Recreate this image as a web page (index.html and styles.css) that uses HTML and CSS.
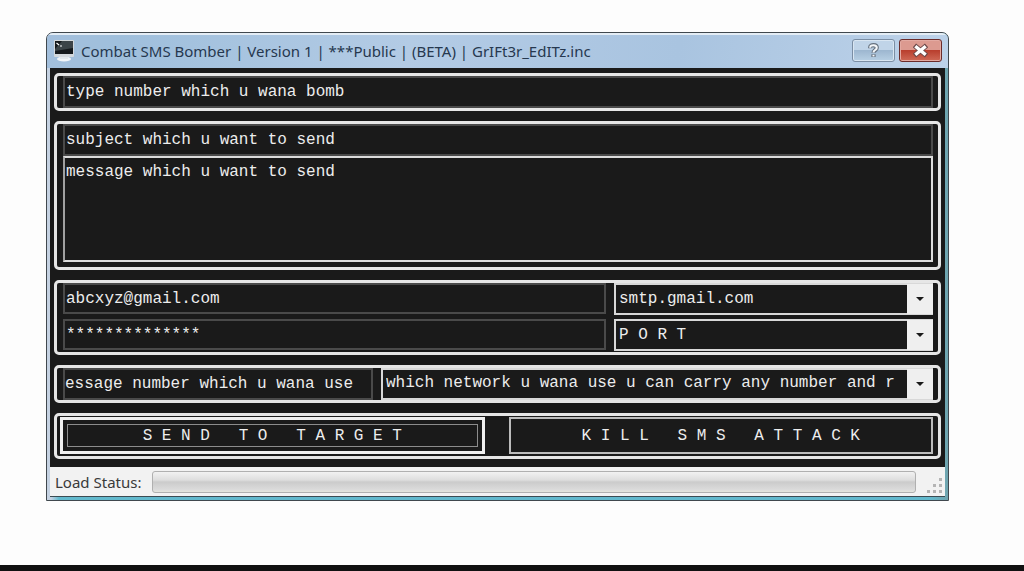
FILE: index.html
```html
<!DOCTYPE html>
<html lang="en">
<head>
<meta charset="utf-8">
<title>Combat SMS Bomber</title>
<link rel="stylesheet" href="styles.css">
</head>
<body>
<main class="window">
  <header class="titlebar">
    <svg class="app-icon" viewBox="0 0 20 22" aria-hidden="true">
      <ellipse cx="10" cy="19" rx="7" ry="2.500" fill="#f1f5f8"/>
      <rect x="6" y="14" width="8" height="5" fill="#e3e8ec"/>
      <rect x="0" y="0" width="20" height="17" rx="1" fill="#d3d8dc"/>
      <rect x="1" y="1" width="18" height="13" fill="#15191c"/>
      <path d="M8 1H19V8L1 11V9Z" fill="#3c4448"/>
      <path d="M2.500 3L5 5M6 6H8" stroke="#fff" stroke-width="1.200" fill="none"/>
    </svg>
    <h1 class="title">Combat SMS Bomber | Version 1 | ***Public | (BETA) | GrIFt3r_EdITz.inc</h1>
    <div class="caption-buttons">
      <button class="caption help" type="button" aria-label="Help">
        <svg viewBox="0 0 16 16" aria-hidden="true"><path d="M4.500 5.500V4.500C4.500 1.500 11.500 1.500 11.500 5C11.500 7.500 8 7.500 8 10.500M8 12V15" fill="none" stroke="#66727f" stroke-width="4.500"/><path d="M4.500 5V4.500C4.500 1.500 11.500 1.500 11.500 5C11.500 7.500 8 7.500 8 10M8 12.500V14.500" fill="none" stroke="#f4f7fa" stroke-width="2.200"/></svg>
      </button>
      <button class="caption close" type="button" aria-label="Close">
        <svg viewBox="0 0 16 16" aria-hidden="true"><path d="M1.500 2.500L14.500 13.500M14.500 2.500L1.500 13.500" fill="none" stroke="#6d4a4a" stroke-width="5.500"/><path d="M2.500 3.500L13.500 12.500M13.500 3.500L2.500 12.500" fill="none" stroke="#fff" stroke-width="3.600"/></svg>
      </button>
    </div>
  </header>
  <form class="client">
    <section class="group">
      <input class="field" type="text" aria-label="Number" value="type number which u wana bomb">
    </section>
    <section class="group group-message">
      <input class="field" type="text" aria-label="Subject" value="subject which u want to send">
      <textarea class="field message" aria-label="Message">message which u want to send</textarea>
    </section>
    <section class="group account">
      <input class="field" type="text" aria-label="Email" value="abcxyz@gmail.com">
      <div class="combo">
        <select class="combo-select" aria-label="Server"><option>smtp.gmail.com</option></select>
        <span class="arrow"></span>
      </div>
      <input class="field" type="text" aria-label="Password" value="**************">
      <div class="combo">
        <select class="combo-select" aria-label="Port"><option>P O R T</option></select>
        <span class="arrow"></span>
      </div>
    </section>
    <section class="group network">
      <input class="field" type="text" aria-label="Message number" value="essage number which u wana use">
      <div class="combo">
        <select class="combo-select" aria-label="Network"><option>which network u wana use u can carry any number and r</option></select>
        <span class="arrow"></span>
      </div>
    </section>
    <section class="group actions">
      <button class="action action-default" type="button"><span class="focus">S E N D   T O   T A R G E T</span></button>
      <button class="action" type="button">K I L L   S M S   A T T A C K</button>
    </section>
  </form>
  <footer class="status">
    <span class="status-label" id="load">Load Status:</span>
    <div class="progress" role="progressbar" aria-labelledby="load"></div>
    <svg class="grip" viewBox="0 0 15 15" aria-hidden="true"><path d="M12 0h3v3h-3zM6 6h3v3h-3zM12 6h3v3h-3zM0 12h3v3h-3zM6 12h3v3h-3zM12 12h3v3h-3z" fill="#b4b4b4"/></svg>
  </footer>
</main>
<div class="bottom-strip"></div>
</body>
</html>
```
FILE: styles.css
```css
* {
  box-sizing: border-box;
}

body {
  margin: 0;
  min-height: 100vh;
  display: flex;
  flex-direction: column;
  justify-content: space-between;
  background: #fdfdfd;
  font-family: "Noto Sans", sans-serif;
}

.window {
  margin: 32px 75px 24px 46px;
  padding: 0 3px 3px;
  border: 1px solid #40484e;
  border-radius: 7px 7px 0 0;
  background: linear-gradient(90deg, #c5d2e2 0, #c5d2e2 4px, #62b9cd 12px, #62b9cd 98%, #6fa3ad 100%);
  overflow: hidden;
}

.titlebar {
  display: flex;
  align-items: center;
  gap: 7px;
  height: 35px;
  margin: 0 -3px;
  padding: 0 6px 2px 7px;
  border-top: 2px solid #e4edf5;
  background: linear-gradient(100deg, #a3bfdc 0, #9fbfdc 8%, #b3cbe5 40%, #a9c4e0 70%, #bdd2e9 100%);
}

.app-icon {
  width: 20px;
  height: 22px;
}

.title {
  flex: 1;
  margin: 0;
  font-size: 15px;
  font-weight: 400;
  line-height: 22px;
  white-space: nowrap;
  color: #26384f;
}

.caption-buttons {
  display: flex;
  gap: 4px;
}

.caption {
  display: flex;
  align-items: center;
  justify-content: center;
  width: 43px;
  height: 23px;
  padding: 0;
  border: 1px solid #7b8ea4;
  border-radius: 3px;
  box-shadow: inset 0 0 0 1px #d9e6f2;
}

.caption svg {
  width: 15px;
  height: 15px;
}

.help {
  background: linear-gradient(#c0d4e8 50%, #9db7d0 50%, #b8d0e4);
}

.close {
  border-color: #6b2c2b;
  background: linear-gradient(#dc9a90 50%, #b93f2e 50%, #cf6a57);
  box-shadow: inset 0 0 0 1px #e3aaa2;
}

.client {
  display: flex;
  flex-direction: column;
  gap: 10px;
  padding: 5px 4px 8px;
  background: #1a1a1a;
}

.group {
  display: grid;
  padding: 0 5px 0 6px;
  border: 3px solid #e6e6e6;
  border-radius: 5px;
}

.group-message {
  padding-bottom: 5px;
}

.account {
  grid-template-columns: 543fr 319fr;
  gap: 4px 8px;
  padding-bottom: 1px;
}

.network {
  grid-template-columns: 310fr 552fr;
  gap: 8px;
}

.actions {
  grid-template-columns: 1fr 1fr;
  gap: 24px;
  padding: 1px 5px 2px 3px;
}

.field,
.combo-select,
.action {
  width: 100%;
  min-width: 0;
  margin: 0;
  border-radius: 0;
  background: #1a1a1a;
  color: #ededed;
  font-family: "Liberation Mono", monospace;
  font-size: 16px;
  line-height: 20px;
}

.field {
  height: 32px;
  padding: 0 1px;
  border: 2px solid #4a4a4a;
  outline: none;
}

.network .field {
  padding: 0;
}

.message {
  height: 106px;
  padding: 4px 1px;
  border: 2px solid #dcdcdc;
  border-left-color: #a0a0a0;
  resize: none;
}

.account .field {
  height: 31px;
}

.combo {
  position: relative;
  min-width: 0;
}

.combo-select {
  display: block;
  height: 32px;
  padding: 0 26px 0 3px;
  border: 2px solid #d8d8d8;
  appearance: none;
}

.network .combo-select {
  padding-bottom: 2px;
}

.arrow {
  position: absolute;
  top: 1px;
  right: 0;
  bottom: 1px;
  width: 26px;
  background: #efefef;
  pointer-events: none;
}

.arrow::after {
  content: "";
  position: absolute;
  top: 50%;
  left: 50%;
  margin: -2px -4px;
  border: 4px solid transparent;
  border-top-color: #1a1a1a;
  border-bottom: 0;
}

.action {
  height: 37px;
  padding: 0;
  border: 2px solid #bcbcbc;
  text-align: center;
  white-space: pre;
}

.action-default {
  padding: 4px;
  border: 3px solid #f0f0f0;
}

.focus {
  display: flex;
  align-items: center;
  justify-content: center;
  height: 23px;
  border: 1px solid #8c8c8c;
}

.status {
  display: flex;
  align-items: center;
  gap: 11px;
  height: 30px;
  padding: 0 3px 0 5px;
  border-bottom: 1px solid #3c4b52;
  background: #f2f2f2;
}

.status-label {
  font-size: 15px;
  line-height: 20px;
  white-space: nowrap;
  color: #3a3a3a;
}

.progress {
  flex: 1;
  height: 22px;
  border: 1px solid #b0b0b0;
  border-radius: 3px;
  background: linear-gradient(#f2f2f2, #dedede 40%, #cbcbcb 50%, #dcdcdc 90%, #e4e6dc);
}

.grip {
  align-self: flex-end;
  width: 15px;
  height: 15px;
  margin-bottom: 3px;
}
  
.bottom-strip {
  height: 6px;
  background: #111;
}
```
